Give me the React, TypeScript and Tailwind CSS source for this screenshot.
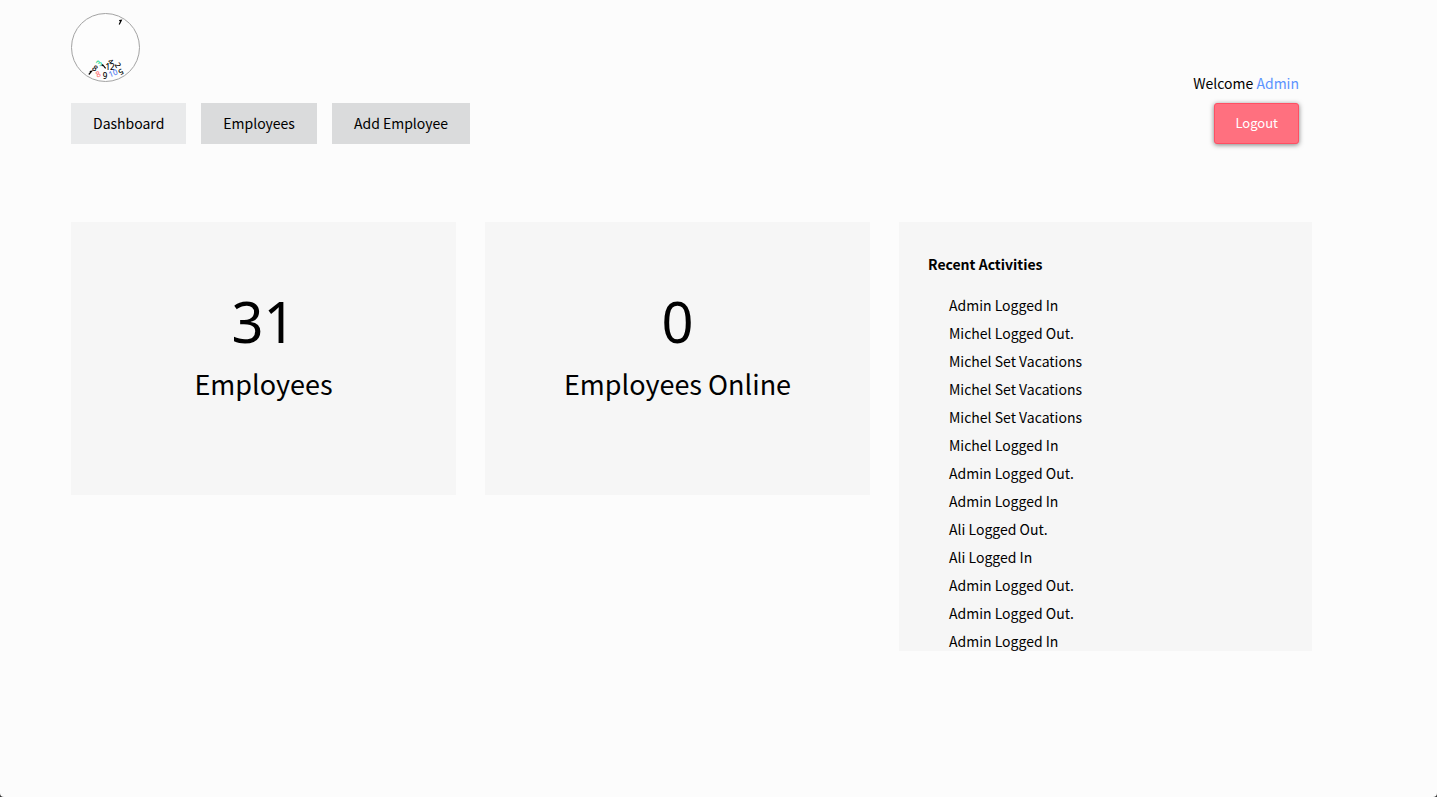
const activities = [
  'Admin Logged In',
  'Michel Logged Out.',
  'Michel Set Vacations',
  'Michel Set Vacations',
  'Michel Set Vacations',
  'Michel Logged In',
  'Admin Logged Out.',
  'Admin Logged In',
  'Ali Logged Out.',
  'Ali Logged In',
  'Admin Logged Out.',
  'Admin Logged Out.',
  'Admin Logged In',
];

const numerals = [
  { label: '3', x: 28, y: 50, angle: -50, color: '#10d68c', size: 8 },
  { label: '8', x: 24, y: 55, angle: 35, color: '#000', size: 8 },
  { label: '8', x: 27, y: 61, angle: -25, color: '#ff7676', size: 8 },
  { label: '9', x: 34, y: 63, angle: 0, color: '#000', size: 8 },
  { label: '12', x: 39, y: 54, angle: 0, color: '#000', size: 8 },
  { label: '4', x: 40, y: 48, angle: 40, color: '#000', size: 7 },
  { label: '2', x: 47, y: 52, angle: 60, color: '#000', size: 8 },
  { label: '10', x: 42, y: 60, angle: -20, color: '#5580ee', size: 8 },
  { label: '5', x: 50, y: 59, angle: 150, color: '#000', size: 8 },
];

function Logo() {
  return (
    <svg
      width="69"
      height="69"
      viewBox="0 0 69 69"
      role="img"
      aria-label="Logo"
      className="font-['Noto_Sans',sans-serif]"
    >
      <circle cx="34.5" cy="34.5" r="34" fill="#fdfdfd" stroke="#a3a3a3" />
      {numerals.map((n, i) => (
        <text
          key={i}
          x={n.x}
          y={n.y}
          dy="3"
          transform={`rotate(${n.angle} ${n.x} ${n.y})`}
          fill={n.color}
          fontSize={n.size}
          fontWeight="500"
          textAnchor="middle"
        >
          {n.label}
        </text>
      ))}
      <path
        d="M48.2 11.5L50.3 7.2L48.2 7.6M17.8 61.5L20.6 58.2L18.8 58.6M31.5 51.5L34.6 55.4M31.5 51.5L31 53.2"
        fill="none"
        stroke="#000"
        strokeWidth="1.2"
      />
    </svg>
  );
}

function StatCard({ value, label }: { value: number; label: string }) {
  return (
    <section className="h-[273px] bg-[#f6f6f6] pt-[64px] text-center">
      <p className="font-['Noto_Sans',sans-serif] text-[56px] leading-[70px]">{value}</p>
      <h2 className="text-[27px] leading-[56px]">{label}</h2>
    </section>
  );
}

export default function App() {
  return (
    <div className="bg-[#333]">
      <div className="min-h-screen rounded-b-sm bg-[#fcfcfc] pt-[13px] pr-[125px] pl-[71px] font-['Noto_Sans_CJK_SC','Noto_Sans',sans-serif] text-sm text-black">
        <header className="pr-[13px]">
          <div className="flex h-[90px] items-start justify-between">
            <Logo />
            <p className="self-end pb-[10px]">
              Welcome <a href="#profile" className="text-[#5b93ff]">Admin</a>
            </p>
          </div>
          <div className="flex items-center justify-between">
            <nav className="flex gap-[15px] leading-[41px]">
              <a href="#dashboard" className="bg-[#e9eaeb] px-[22px]">Dashboard</a>
              <a href="#employees" className="bg-[#dadbdc] px-[22px]">Employees</a>
              <a href="#add" className="bg-[#dadbdc] px-[22px]">Add Employee</a>
            </nav>
            <button
              type="button"
              className="h-[41px] rounded-[3px] border border-[#ff4f63] bg-[#ff707f] px-5 text-[13px] text-white shadow-[0_1px_5px_rgba(0,0,0,0.5)]"
            >
              Logout
            </button>
          </div>
        </header>
        <main className="mt-[78px] grid grid-cols-[385fr_385fr_413fr] items-start gap-[29px]">
          <StatCard value={31} label="Employees" />
          <StatCard value={0} label="Employees Online" />
          <section className="h-[429px] overflow-hidden bg-[#f6f6f6] px-[29px] pt-7">
            <h2 className="leading-7 font-bold">Recent Activities</h2>
            <ul className="mt-[13px] pl-[21px] leading-7">
              {activities.map((activity, i) => (
                <li key={i}>{activity}</li>
              ))}
            </ul>
          </section>
        </main>
      </div>
    </div>
  );
}
